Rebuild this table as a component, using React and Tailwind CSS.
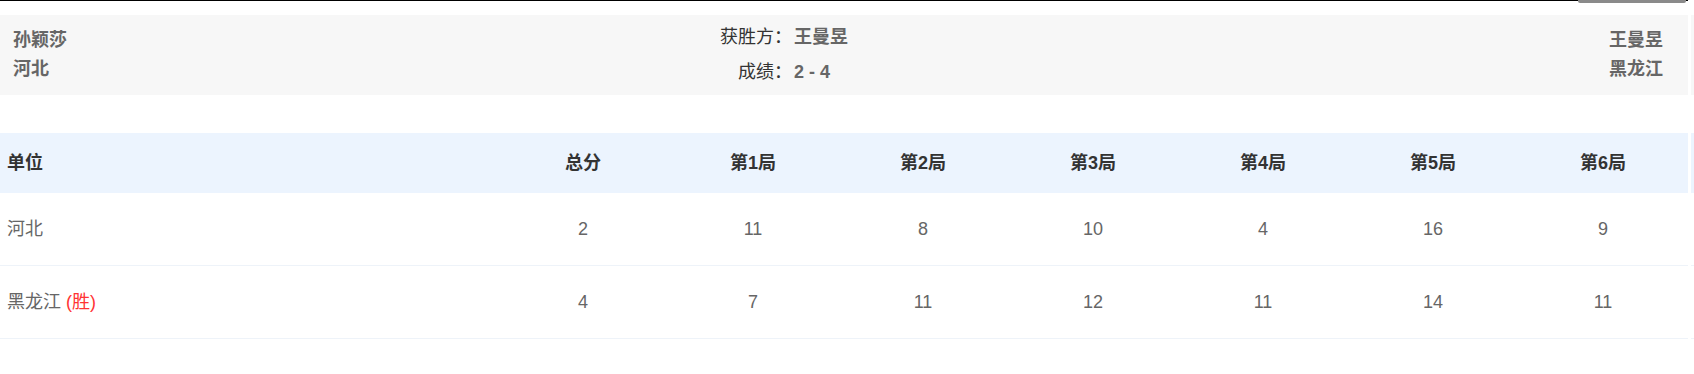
export default function App() {
  const cols = ['单位', '总分', '第1局', '第2局', '第3局', '第4局', '第5局', '第6局'];
  const rows = [
    { team: '河北', win: false, scores: [2, 11, 8, 10, 4, 16, 9] },
    { team: '黑龙江', win: true, scores: [4, 7, 11, 12, 11, 14, 11] },
  ];

  return (
    <div className="relative w-[1694px] bg-white font-['Liberation_Sans','Noto_Sans_CJK_SC',sans-serif] text-[18px]">
      {/* top rule + tab edge */}
      <div className="h-px w-[1688px] bg-black" />
      <div className="absolute top-0 left-[1578px] w-[108px] h-[3px] bg-[#8a8a8a] rounded-b-[2px]" />

      <div className="flex mt-[14px]">
        <div className="w-[1688px]">
          {/* match summary */}
          <div className="h-[80px] bg-[#f7f7f7] flex items-center pl-[13px] pr-[25px]">
            <div className="w-[679px] leading-[29px] font-bold text-[#666]">
              <div>孙颖莎</div>
              <div>河北</div>
            </div>
            <div className="grid grid-cols-[100px_auto] leading-[35px]">
              <div className="text-right text-[#333]">获胜方：</div>
              <div className="pl-[2px] font-bold text-[#666]">王曼昱</div>
              <div className="text-right text-[#333]">成绩：</div>
              <div className="pl-[2px] font-bold text-[#666]">2 - 4</div>
            </div>
            <div className="flex-1 text-right leading-[29px] font-bold text-[#666]">
              <div>王曼昱</div>
              <div>黑龙江</div>
            </div>
          </div>

          {/* score table */}
          <div className="mt-[38px]">
            <div className="grid grid-cols-[498px_repeat(7,170px)] h-[60px] items-center bg-[#ecf4fe] font-bold text-[#333]">
              {cols.map((c, i) => (
                <div key={c} className={i === 0 ? 'pl-[7px]' : 'text-center'}>{c}</div>
              ))}
            </div>
            {rows.map((r) => (
              <div key={r.team} className="grid grid-cols-[498px_repeat(7,170px)] h-[73px] items-center border-b border-[#eef3f9] text-[#666]">
                <div className="pl-[7px]">
                  {r.team}
                  {r.win && <span className="text-[#ff3333]"> (胜)</span>}
                </div>
                {r.scores.map((s, i) => (
                  <div key={i} className="text-center">{s}</div>
                ))}
              </div>
            ))}
          </div>
        </div>

        {/* edge of the next panel */}
        <div className="ml-[3px] w-[3px] flex flex-col">
          <div className="h-[80px] bg-[#f7f7f7]" />
          <div className="h-[38px]" />
          <div className="h-[60px] bg-[#ecf4fe]" />
          <div className="h-[73px] border-b border-[#eef3f9]" />
          <div className="h-[73px] border-b border-[#eef3f9]" />
        </div>
      </div>
    </div>
  );
}
